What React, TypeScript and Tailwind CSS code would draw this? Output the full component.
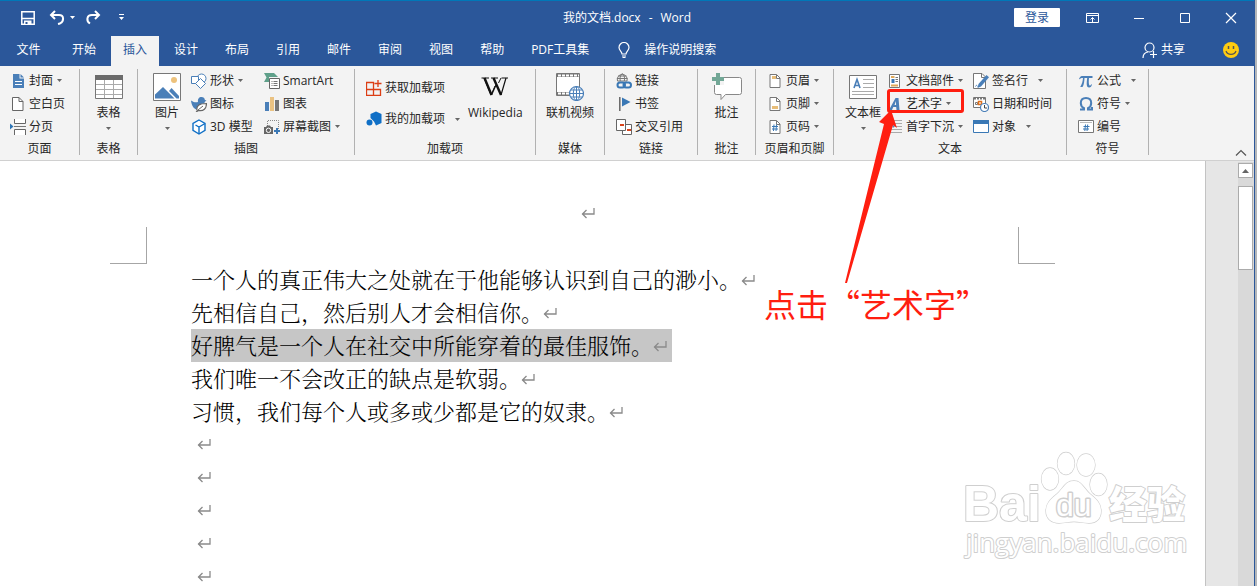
import React from 'react';
import type { ReactNode } from 'react';

/* ── Shared bits ────────────────────────────────────────────── */
function Caret({ className = '' }: { className?: string }) {
  return (
    <svg viewBox="0 0 5 3" className={`h-[3px] w-[5px] shrink-0 ${className}`}>
      <path d="M0 0h5L2.5 3z" fill="#666" />
    </svg>
  );
}

function Icon({ children, size = 16 }: { children: ReactNode; size?: number }) {
  return (
    <svg viewBox={`0 0 ${size} ${size}`} width={size} height={size} fill="none" className="shrink-0">
      {children}
    </svg>
  );
}

function ReturnMark() {
  return (
    <svg viewBox="0 0 15 12" width="15" height="12" fill="none" className="shrink-0">
      <path d="M13 1v6H1M5.500 3L1.500 7l4 4" stroke="#8a8a8a" strokeWidth="1.300" />
    </svg>
  );
}

/* ── Ribbon icons ───────────────────────────────────────────── */
const page = 'M3 1.5h6.5l3.5 3.5v9.5H3z';

const icons = {
  cover: (
    <Icon>
      <path d="M3 1h6.500v4.500H14V15H3z" fill="#4a7fb8" />
      <path d="M10.500 1L14 4.500h-3.500z" fill="#4a7fb8" />
      <path d="M5 9l1-1 1 1 1-1 1 1 1-1 1 1 1-1M5 11.500h7" stroke="#fff" />
    </Icon>
  ),
  blank: (
    <Icon>
      <path d="M2.500 1.500h6.500l4 4v9h-10.500z" fill="#fff" stroke="#666" />
      <path d="M9 1.500v4h4" stroke="#666" />
    </Icon>
  ),
  pageBreak: (
    <Icon>
      <path d="M4.500 0v4.500h11V0M4.500 16v-5.500h11V16" fill="#fff" stroke="#666" />
      <path d="M4 7.500h12" stroke="#777" />
      <path d="M0 4.500l3.500 3L0 10.500z" fill="#2e75b6" />
    </Icon>
  ),
  shapes: (
    <Icon>
      <circle cx="10.500" cy="5.500" r="4.500" fill="#fff" stroke="#4a7fb8" />
      <path d="M.5 3.500h7v7h-7z" fill="#fff" stroke="#4a7fb8" />
      <path d="M9.500 5.500l5 5-5 5-5-5z" fill="#fff" stroke="#4a7fb8" />
    </Icon>
  ),
  duck: (
    <Icon>
      <path d="M0 4.500c3 2 5 2 7 1.500C6.500 3 8 1 10.500 1c2 0 3.200 1.300 3.400 3l1.600.5-1.600 1.200c-.4 1.500-1.400 2.500-2.400 3-3 .5-5 2.500-5.500 5C2.500 13 .5 9 0 4.500z" fill="#4a7fb8" />
      <path d="M6 14.500C5 9 9 7.500 15.500 7.500c0 5-3 8-8 7L5 16" fill="#fff" stroke="#666" strokeWidth="1.200" />
      <path d="M7 14l5-4" stroke="#666" />
    </Icon>
  ),
  cube: (
    <Icon>
      <path d="M8 1l6 3.300v7L8 15l-6-3.700v-7z" fill="#fff" stroke="#0f6fc6" strokeWidth="1.400" />
      <path d="M4.500 6L8 8l6-3.500M8 8v7" stroke="#0f6fc6" strokeWidth="1.400" />
    </Icon>
  ),
  smartArt: (
    <Icon>
      <path d="M0 0h10l4 4H5v5H0l2.500-4.500z" fill="#5fa08a" />
      <path d="M5.500 5.500h10v10h-10z" fill="#fff" stroke="#666" />
      <path d="M7.500 8.500h1m1 0h4m-6 2h1m1 0h4m-6 2h1m1 0h4" stroke="#777" />
    </Icon>
  ),
  chart: (
    <Icon>
      <path d="M1 6h4v9H1z" fill="#4a7fb8" />
      <path d="M6 1h4v14H6z" fill="#eac282" />
      <path d="M11 4h4v11h-4z" fill="#777" />
    </Icon>
  ),
  screenshot: (
    <Icon>
      <path d="M4 1.500h10.500V10M3.500 2v6" stroke="#888" strokeDasharray="1 1" />
      <path d="M0 8h2l1-1.500h3L7 8h2v7H0z" fill="#666" />
      <circle cx="4.500" cy="11.300" r="2.200" fill="#666" stroke="#fff" />
      <path d="M13 9v6m-3-3h6" stroke="#3a78b5" strokeWidth="2" />
    </Icon>
  ),
  getAddins: (
    <Icon>
      <path d="M.5 2.500h7v13h-7zM.5 9.500h14v6h-14M12 0v7M8.500 3.500h7" stroke="#dc3e15" strokeWidth="1.300" />
    </Icon>
  ),
  myAddins: (
    <Icon>
      <path d="M10 .5l5.500 2.500v9L10 14.500l-2-4L4.500 7V3z" fill="#0f6fc6" />
      <circle cx="3.500" cy="11.500" r="3" fill="#0f6fc6" />
    </Icon>
  ),
  link: (
    <Icon>
      <path d="M1.500 8a5 5 0 1 1 9.500 0M1 5.500h10.500M6.300.5c-2.500 2-2.500 5-2 7.500m2-7.500c2.500 2 2.500 5 2 7.500M2 3h8.500M1.500 8H11" stroke="#777" />
      <rect x="1.500" y="9.500" width="7.500" height="5" rx="2.500" stroke="#3a78b5" strokeWidth="2" />
      <rect x="7.500" y="9.500" width="7.500" height="5" rx="2.500" stroke="#3a78b5" strokeWidth="2" />
    </Icon>
  ),
  bookmark: (
    <Icon>
      <path d="M3.800 1v14" stroke="#666" strokeWidth="1.500" />
      <path d="M6 1.500l8.500 4.500L6 10.500z" fill="#3a78b5" />
    </Icon>
  ),
  crossRef: (
    <Icon>
      <path d="M6.500 5.500h9v10h-9z" fill="#fff" stroke="#666" />
      <path d="M.5.5h9v11h-9z" fill="#fff" stroke="#666" />
      <path d="M4 5h4v2H4zM11 10h4v2h-4z" fill="#d9441c" />
    </Icon>
  ),
  header: (
    <Icon>
      <path d={page} fill="#fff" stroke="#777" />
      <path d="M9.500 1.500v4H13" stroke="#777" />
      <path d="M5 3h4v3H5z" fill="#e8bd78" />
    </Icon>
  ),
  footer: (
    <Icon>
      <path d={page} fill="#fff" stroke="#777" />
      <path d="M9.500 1.500v4H13" stroke="#777" />
      <path d="M5 10h6v3H5z" fill="#e8bd78" />
    </Icon>
  ),
  pageNumber: (
    <Icon>
      <path d={page} fill="#fff" stroke="#777" />
      <path d="M9.500 1.500v4H13" stroke="#777" />
      <path d="M7 5.500L6.500 12M9.500 5.500L9 12M5 7.500h6M5 10h6" stroke="#3a78b5" />
    </Icon>
  ),
  parts: (
    <Icon>
      <path d="M2.500 1.500h10v13h-10z" fill="#fff" stroke="#777" />
      <path d="M4 4h3.500M4 12.500h7" stroke="#e0a95a" strokeWidth="2" />
      <path d="M4.500 6h3v4h-3z" fill="#3a78b5" />
      <path d="M8.500 4.500H11m-2.500 2H11m-2.500 2H11" stroke="#777" />
    </Icon>
  ),
  wordArt: (
    <Icon>
      <path d="M2 14l6.500-12h3L12.500 14h-3l-.3-3H6.300L5 14z" fill="#4a7fb8" />
      <path d="M7.500 9h1.600l-.2-4z" fill="#f3f3f3" />
    </Icon>
  ),
  dropCap: (
    <Icon>
      <path d="M7 1.500h8M7 4.500h8M7 7.500h8M2 10.500h13M2 13.500h13" stroke="#aaa" />
      <path d="M2 8.500l2.500-7 2 7" stroke="#4a7fb8" strokeWidth="1.500" />
    </Icon>
  ),
  signature: (
    <Icon>
      <path d="M.5.500h8.500l3.500 3.500v11.500H.5z" fill="#fff" stroke="#777" />
      <path d="M8.500.500v4h4" stroke="#777" />
      <path d="M13.500 2l2.500 2.200-8 9.300-3.500 1.500 1-4z" fill="#4a7fb8" />
      <path d="M2.500 13.500c1-2 1.500-1 2 0" stroke="#4a7fb8" />
    </Icon>
  ),
  dateTime: (
    <Icon>
      <path d="M.5 1.500h12v10H.5z" fill="#fff" stroke="#777" />
      <path d="M1 2.500h11" stroke="#777" strokeWidth="2" strokeDasharray="2 1" />
      <path d="M2.500 6.500h2v2h-2z" stroke="#777" />
      <path d="M5.500 5.500h3v3h-3z" stroke="#e0701c" strokeWidth="1.500" />
      <circle cx="11.500" cy="11.500" r="4" fill="#fff" stroke="#4a7fb8" strokeWidth="1.200" />
      <path d="M11.500 9v3h2.500" stroke="#444" />
    </Icon>
  ),
  object: (
    <Icon>
      <path d="M.5 1.500h15v12H.5z" fill="#fff" stroke="#3a78b5" />
      <path d="M0 1h16v4H0z" fill="#3a78b5" />
    </Icon>
  ),
  equation: (
    <Icon>
      <path d="M1 6c1-2.500 2-3 4-3h9.500v2H11c-.3 3-.4 5 .2 7 .5 1 1.500.8 2-.8l.7.2c-.3 2-1.200 3-2.800 3C8 14.400 8.600 10 9.200 5H6.500C6.300 8.500 6 12 4.500 14H2.200C4 11 4.700 8.500 5 5 3 5 2.300 5.300 1.700 6.300z" fill="#4a7fb8" />
    </Icon>
  ),
  symbol: (
    <Icon>
      <path d="M2 13.500h4v-1.300C3.600 11 2.800 9 2.800 7c0-3 2-5 5.200-5s5.200 2 5.200 5c0 2-.8 4-3.200 5.200v1.300h4V11" stroke="#4a7fb8" strokeWidth="2" />
    </Icon>
  ),
  numbering: (
    <Icon>
      <path d="M.5 1.500h15v12H.5z" fill="#fff" stroke="#777" />
      <path d="M2 3.500h12" stroke="#bbb" />
      <path d="M7.500 5.500l-.700 6.500M9.700 5.500L9 12M5.500 7.500h6M5 10h6" stroke="#3a78b5" />
    </Icon>
  ),
};

const bigIcons = {
  table: (
    <svg viewBox="0 0 28 26" width="28" height="26" fill="none">
      <path d="M.5 1.500h27v23H.5z" fill="#fff" stroke="#777" />
      <path d="M0 1h28v5H0z" fill="#6b6b6b" />
      <path d="M1 10.500h26M1 15.500h26M1 20.500h26M9.500 6v18M18.500 6v18" stroke="#aaa" />
    </svg>
  ),
  picture: (
    <svg viewBox="0 0 28 28" width="28" height="28" fill="none">
      <path d="M.5.500h27v27H.5z" fill="#fff" stroke="#777" />
      <circle cx="21" cy="7" r="3" fill="#edc27c" />
      <path d="M2 25.500v-4l8-7.500L21.500 25.500z" fill="#4a7fb8" />
      <path d="M16 18l2.500-3 7.500 8v2.500h-2.500z" fill="#4a7fb8" />
    </svg>
  ),
  wikipedia: (
    <svg viewBox="0 0 28 20" width="28" height="20" fill="none">
      <path d="M.5 1h7.500M10 1h7M20.500 1H27" stroke="#111" strokeWidth="1" />
      <path d="M3 1l7 17 4-9M17.500 6L20 1" stroke="#111" strokeWidth="1" />
      <path d="M3.500 1l7 17M12.500 1l7.500 17" stroke="#111" strokeWidth="2.400" />
      <path d="M10.500 18l4.500-10M20 18l5-17" stroke="#111" strokeWidth="1.200" />
    </svg>
  ),
  video: (
    <svg viewBox="0 0 28 28" width="28" height="28" fill="none">
      <path d="M.5.500h23v22H.5z" fill="#fff" stroke="#777" />
      <path d="M1 2.500h22M1 20.500h13" stroke="#777" strokeWidth="3" />
      <path d="M2 2.500h21M2 20.500h12" stroke="#fff" strokeWidth="2" strokeDasharray="3 1" />
      <circle cx="20.500" cy="20.500" r="7" fill="#fff" stroke="#4a7fb8" strokeWidth="1.200" />
      <ellipse cx="20.500" cy="20.500" rx="3.200" ry="7" stroke="#4a7fb8" />
      <path d="M20.500 13.500v14M13.500 20.500h14M15 17h11M15 24h11" stroke="#4a7fb8" />
    </svg>
  ),
  comment: (
    <svg viewBox="0 0 30 30" width="30" height="30" fill="none">
      <path d="M4.500 5.500h23q2 0 2 2v13q0 2-2 2H13.500l-4.500 5v-5H4.500q-2 0-2-2v-13q0-2 2-2z" fill="#fff" stroke="#888" />
      <path d="M0 0h12v13H0z" fill="#f3f3f3" />
      <path d="M6 1v12M0 7h12" stroke="#72a796" strokeWidth="4" />
    </svg>
  ),
  textBox: (
    <svg viewBox="0 0 28 26" width="28" height="26" fill="none">
      <path d="M.5 1.500h27v23H.5z" fill="#fff" stroke="#777" />
      <path d="M5 14L8 5.500 11 14M6 11.500h4" stroke="#4a7fb8" strokeWidth="1.600" />
      <path d="M14 5.500h11M14 9.500h11M14 13.500h11M3 17.500h22M3 20.500h22" stroke="#aaa" />
    </svg>
  ),
};

/* ── Ribbon building blocks ─────────────────────────────────── */
type Drop = 'none' | 'near' | 'far';

function SmallButton({ icon, label, drop = 'none' }: { icon: ReactNode; label: string; drop?: Drop }) {
  return (
    <button className="flex h-[23px] items-center whitespace-nowrap">
      {icon}
      <span className="ml-[3px]">{label}</span>
      {drop !== 'none' && <Caret className={drop === 'far' ? 'ml-2.5' : 'ml-1'} />}
    </button>
  );
}

function BigButton({ icon, label, drop = false }: { icon: ReactNode; label: string; drop?: boolean }) {
  return (
    <button className="flex h-[66px] flex-col items-center whitespace-nowrap">
      <span className="flex h-9 items-center justify-center">{icon}</span>
      <span className="h-4 leading-4">{label}</span>
      {drop && <Caret className="mt-[6px]" />}
    </button>
  );
}

function Group({ title, className, children }: { title: string; className: string; children: ReactNode }) {
  return (
    <section className={`shrink-0 pt-1 ${className}`}>
      <div className="h-[86px] border-r border-[#b1b1b1]">
        <div className="-mt-px flex h-[69px] items-start">{children}</div>
        <h2 className="text-center leading-[22px]">{title}</h2>
      </div>
    </section>
  );
}

const tabs = ['开始', '插入', '设计', '布局', '引用', '邮件', '审阅', '视图', '帮助', 'PDF工具集'];

const paragraphs = [
  { text: '一个人的真正伟大之处就在于他能够认识到自己的渺小。' },
  { text: '先相信自己，然后别人才会相信你。' },
  { text: '好脾气是一个人在社交中所能穿着的最佳服饰。', selected: true },
  { text: '我们唯一不会改正的缺点是软弱。' },
  { text: '习惯，我们每个人或多或少都是它的奴隶。' },
];

function TitleBar() {
  return (
    <header className="grid h-9 grid-cols-[1fr_auto_1fr] items-center border-t border-[#0078b8] pb-0.5">
      <div className="flex items-center pl-5">
        <button aria-label="保存">
          <Icon>
            <path d="M1.800 1.800h12.400v12.400H1.800zM2 8.500h12" stroke="#fff" strokeWidth="1.500" />
            <path d="M4 10.500h7.500V15H4z" fill="#fff" />
            <path d="M5.500 12h2v2h-2z" fill="#2b579a" />
          </Icon>
        </button>
        <button aria-label="撤消" className="ml-[13px] flex items-center">
          <Icon>
            <path d="M6 1L2 5l4 4M2.500 5H10c5 0 5.500 6 1 8.500l-2 .5" stroke="#fff" strokeWidth="2" />
          </Icon>
          <svg viewBox="0 0 5 3" className="ml-[5px] h-[3px] w-[5px]"><path d="M0 0h5L2.500 3z" fill="#fff" /></svg>
        </button>
        <button aria-label="恢复" className="ml-[10px]">
          <Icon>
            <path d="M10 1l4 4-4 4M13.500 5H7C1.500 5 1 11 5 13.500" stroke="#fff" strokeWidth="2" />
          </Icon>
        </button>
        <button aria-label="自定义快速访问工具栏" className="ml-[18px]">
          <svg viewBox="0 0 5 7" width="5" height="7"><path d="M0 0h5v1H0zM0 3h5L2.500 6z" fill="#fff" /></svg>
        </button>
      </div>
      <h1 className="flex gap-2">
        <span>我的文档.docx</span>
        <span>-</span>
        <span>Word</span>
      </h1>
      <div className="flex items-center justify-end">
        <button className="h-[19px] w-[46px] rounded-[1px] bg-white text-[#2b579a]">登录</button>
        <button aria-label="功能区显示选项" className="ml-[25px]">
          <Icon>
            <path d="M1.500 3.500h12v9h-12zM1 5.500h13M7.500 12V7.500M5.500 9.500l2-2 2 2" stroke="#fff" />
          </Icon>
        </button>
        <button aria-label="最小化" className="ml-[30px]">
          <Icon><path d="M3 8.500h10" stroke="#fff" /></Icon>
        </button>
        <button aria-label="最大化" className="ml-[30px]">
          <Icon><path d="M3.500 3.500h9v9h-9z" stroke="#fff" /></Icon>
        </button>
        <button aria-label="关闭" className="mr-[15px] ml-[30px]">
          <Icon><path d="M3 3l10 10M13 3L3 13" stroke="#fff" strokeWidth="1.200" /></Icon>
        </button>
      </div>
    </header>
  );
}

function TabBar() {
  return (
    <nav className="flex h-[30px] items-stretch">
      <button className="w-[57px] pb-0.5">文件</button>
      <div className="ml-[3px] flex gap-[3px]">
        {tabs.map((tab) => (
          <button
            key={tab}
            className={`px-3 pb-0.5 whitespace-nowrap ${tab === '插入' ? 'bg-[#f3f3f3] text-[#2b579a]' : ''}`}
          >
            {tab}
          </button>
        ))}
      </div>
      <button className="ml-[15px] flex items-center pb-0.5 whitespace-nowrap">
        <Icon>
          <path d="M6 12c0-2.500-3-3.500-3-6.500a5 5 0 0 1 10 0c0 3-3 4-3 6.500zM6 14h4M6.500 15.500h3" stroke="#fff" strokeWidth="1.200" />
        </Icon>
        <span className="ml-3">操作说明搜索</span>
      </button>
      <button className="ml-auto flex items-center pb-0.5">
        <Icon>
          <circle cx="7.500" cy="5.500" r="4.500" stroke="#fff" strokeWidth="1.200" />
          <path d="M1 16c0-4 2-5.500 5-6M8 12.500h7M11.500 9v7" stroke="#fff" strokeWidth="1.200" />
        </Icon>
        <span className="ml-[3px]">共享</span>
      </button>
      <button aria-label="反馈" className="mr-[15px] ml-[38px] pb-0.5">
        <Icon>
          <circle cx="8" cy="8" r="8" fill="#fc1" />
          <path d="M5.500 4v3M10.500 4v3" stroke="#555" strokeWidth="1.500" />
          <path d="M3 9c1.500 4.500 8.500 4.500 10 0" stroke="#555" strokeWidth="1.200" />
        </Icon>
      </button>
    </nav>
  );
}

function Ribbon() {
  return (
    <div className="flex h-[95px] border-b border-[#d0d0d0] bg-[#f3f3f3] text-[#262626]">
      <Group title="页面" className="w-20">
        <div className="pl-2.5">
          <SmallButton icon={icons.cover} label="封面" drop="near" />
          <SmallButton icon={icons.blank} label="空白页" />
          <SmallButton icon={icons.pageBreak} label="分页" />
        </div>
      </Group>
      <Group title="表格" className="w-[58px]">
        <div className="mx-auto"><BigButton icon={bigIcons.table} label="表格" drop /></div>
      </Group>
      <Group title="插图" className="w-[217px]">
        <div className="ml-[15px]"><BigButton icon={bigIcons.picture} label="图片" drop /></div>
        <div className="ml-2.5 w-[73px]">
          <SmallButton icon={icons.shapes} label="形状" drop="near" />
          <SmallButton icon={icons.duck} label="图标" />
          <SmallButton icon={icons.cube} label="3D 模型" />
        </div>
        <div>
          <SmallButton icon={icons.smartArt} label="SmartArt" />
          <SmallButton icon={icons.chart} label="图表" />
          <SmallButton icon={icons.screenshot} label="屏幕截图" drop="near" />
        </div>
      </Group>
      <Group title="加载项" className="w-[181px]">
        <div className="flex h-[69px] flex-col justify-center gap-2 pl-[11px]">
          <SmallButton icon={icons.getAddins} label="获取加载项" />
          <SmallButton icon={icons.myAddins} label="我的加载项" drop="far" />
        </div>
        <div className="ml-2"><BigButton icon={bigIcons.wikipedia} label="Wikipedia" /></div>
      </Group>
      <Group title="媒体" className="w-[69px]">
        <div className="mx-auto"><BigButton icon={bigIcons.video} label="联机视频" /></div>
      </Group>
      <Group title="链接" className="w-[93px]">
        <div className="pl-[11px]">
          <SmallButton icon={icons.link} label="链接" />
          <SmallButton icon={icons.bookmark} label="书签" />
          <SmallButton icon={icons.crossRef} label="交叉引用" />
        </div>
      </Group>
      <Group title="批注" className="w-[58px]">
        <div className="mx-auto"><BigButton icon={bigIcons.comment} label="批注" /></div>
      </Group>
      <Group title="页眉和页脚" className="w-[78px]">
        <div className="pl-[11px]">
          <SmallButton icon={icons.header} label="页眉" drop="near" />
          <SmallButton icon={icons.footer} label="页脚" drop="near" />
          <SmallButton icon={icons.pageNumber} label="页码" drop="near" />
        </div>
      </Group>
      <Group title="文本" className="w-[233px]">
        <div className="ml-[11px]"><BigButton icon={bigIcons.textBox} label="文本框" drop /></div>
        <div className="ml-1.5 w-[86px]">
          <SmallButton icon={icons.parts} label="文档部件" drop="near" />
          <SmallButton icon={icons.wordArt} label="艺术字" drop="near" />
          <SmallButton icon={icons.dropCap} label="首字下沉" drop="near" />
        </div>
        <div>
          <SmallButton icon={icons.signature} label="签名行" drop="far" />
          <SmallButton icon={icons.dateTime} label="日期和时间" />
          <SmallButton icon={icons.object} label="对象" drop="far" />
        </div>
      </Group>
      <Group title="符号" className="w-[82px]">
        <div className="pl-[11px]">
          <SmallButton icon={icons.equation} label="公式" drop="far" />
          <SmallButton icon={icons.symbol} label="符号" drop="near" />
          <SmallButton icon={icons.numbering} label="编号" />
        </div>
      </Group>
      <button aria-label="折叠功能区" className="mr-[7px] mb-0.5 ml-auto self-end">
        <svg viewBox="0 0 12 10" width="12" height="10" fill="none">
          <path d="M1 7.500l5-5 5 5" stroke="#555" strokeWidth="1.200" />
        </svg>
      </button>
    </div>
  );
}

function Watermark() {
  return (
    <svg
      viewBox="0 0 240 110"
      width="240"
      height="110"
      className="absolute right-2 bottom-[26px]"
      fill="#fff"
      stroke="#cfcfcf"
      strokeWidth="2"
      strokeLinejoin="round"
      style={{ paintOrder: 'stroke' }}
    >
      <text x="6" y="71" fontFamily="'Liberation Sans', sans-serif" fontSize="50" fontWeight="700">Bai</text>
      <g strokeWidth="1.300">
        <ellipse cx="93" cy="29" rx="8.500" ry="11" />
        <ellipse cx="109" cy="13.500" rx="8.500" ry="11" />
        <ellipse cx="129" cy="15" rx="9" ry="11" />
        <ellipse cx="141.500" cy="34.500" rx="8.500" ry="11" />
        <path d="M117 31c-9 0-11 8-17 13-6 5-11 9-11 17 0 8 6 12 13 12 6 0 10-1.500 15-1.500s9 1.500 15 1.500c7 0 12-4 12-12 0-8-5-12-11-17-6-5-8-13-16-13z" />
      </g>
      <text x="99" y="66" fontFamily="'Liberation Sans', sans-serif" fontSize="32" strokeWidth="3">du</text>
      <text x="152" y="68" fontFamily="'Noto Sans CJK SC', sans-serif" fontSize="38" fontWeight="900">经验</text>
      <text x="9" y="102" fontFamily="'Open Sans', sans-serif" fontSize="26">jingyan.baidu.com</text>
    </svg>
  );
}

function DocumentArea() {
  return (
    <main className="flex min-h-0 flex-1 bg-[#e6e6e6]">
      <article className="relative min-w-0 flex-1 overflow-hidden border-r border-[#c3c3c3] bg-white pr-[150px] pl-[110px]">
        <div className="flex h-[66px] items-end justify-center pb-2 pl-3">
          <ReturnMark />
        </div>
        <div className="flex h-[37px] justify-between">
          <div className="w-[37px] border-r border-b border-[#a6a6a6]" />
          <div className="w-[37px] border-b border-l border-[#a6a6a6]" />
        </div>
        <div className="-mt-px pl-[81px] font-['Noto_Serif_CJK_SC','Noto_Sans_CJK_SC',serif] text-[22px] leading-[31px] font-light text-black">
          {paragraphs.map((p) => (
            <p key={p.text} className={`flex h-[33px] w-max items-center pr-1 ${p.selected ? 'bg-[#c6c6c6]' : ''}`}>
              <span className="h-[33px]">{p.text}</span>
              <ReturnMark />
            </p>
          ))}
          {Array.from({ length: 5 }, (_, i) => (
            <p key={i} className="flex h-[33px] items-center pb-0.5 pl-1.5">
              <ReturnMark />
            </p>
          ))}
        </div>
        <Watermark />
      </article>
      <aside className="ml-8 w-4 border-t border-[#e6e6e6] bg-[#d9d9d9] pt-px">
        <button aria-label="向上滚动" className="flex h-[15px] w-[15px] items-center justify-center border border-[#ababab] bg-white">
          <svg viewBox="0 0 7 4" width="7" height="4"><path d="M0 4l3.500-4L7 4z" fill="#666" /></svg>
        </button>
        <div className="mt-2 h-[84px] w-[15px] border border-[#ababab] bg-white" />
      </aside>
    </main>
  );
}

/* Callout drawn above both the ribbon and the page */
function Callout() {
  return (
    <div className="pointer-events-none absolute top-[89px] left-[764px] text-[#ff1e10]">
      <div className="ml-[123px] h-6 w-[77px] rounded-[3px] border-[3px] border-current" />
      <svg viewBox="0 0 200 174" width="200" height="174" className="-mt-1 block">
        <path d="M81 174L120 15l-5-2L127 1l6 18-4-3L83 174z" fill="currentColor" />
      </svg>
      <p className="font-['Noto_Sans_CJK_SC',sans-serif] text-[32px] leading-[40px] whitespace-nowrap">点击“艺术字”</p>
    </div>
  );
}

export default function App() {
  return (
    <div
      lang="zh-CN"
      className="relative flex h-screen flex-col overflow-hidden border-r-2 border-[#b4b6b8] font-['Open_Sans','Noto_Sans_CJK_SC',sans-serif] text-[12px] leading-4"
    >
      <div className="flex min-h-0 flex-1 flex-col border-r border-[#2b579a] bg-[#2b579a] text-white">
        <TitleBar />
        <TabBar />
        <Ribbon />
        <DocumentArea />
      </div>
      <Callout />
    </div>
  );
}
